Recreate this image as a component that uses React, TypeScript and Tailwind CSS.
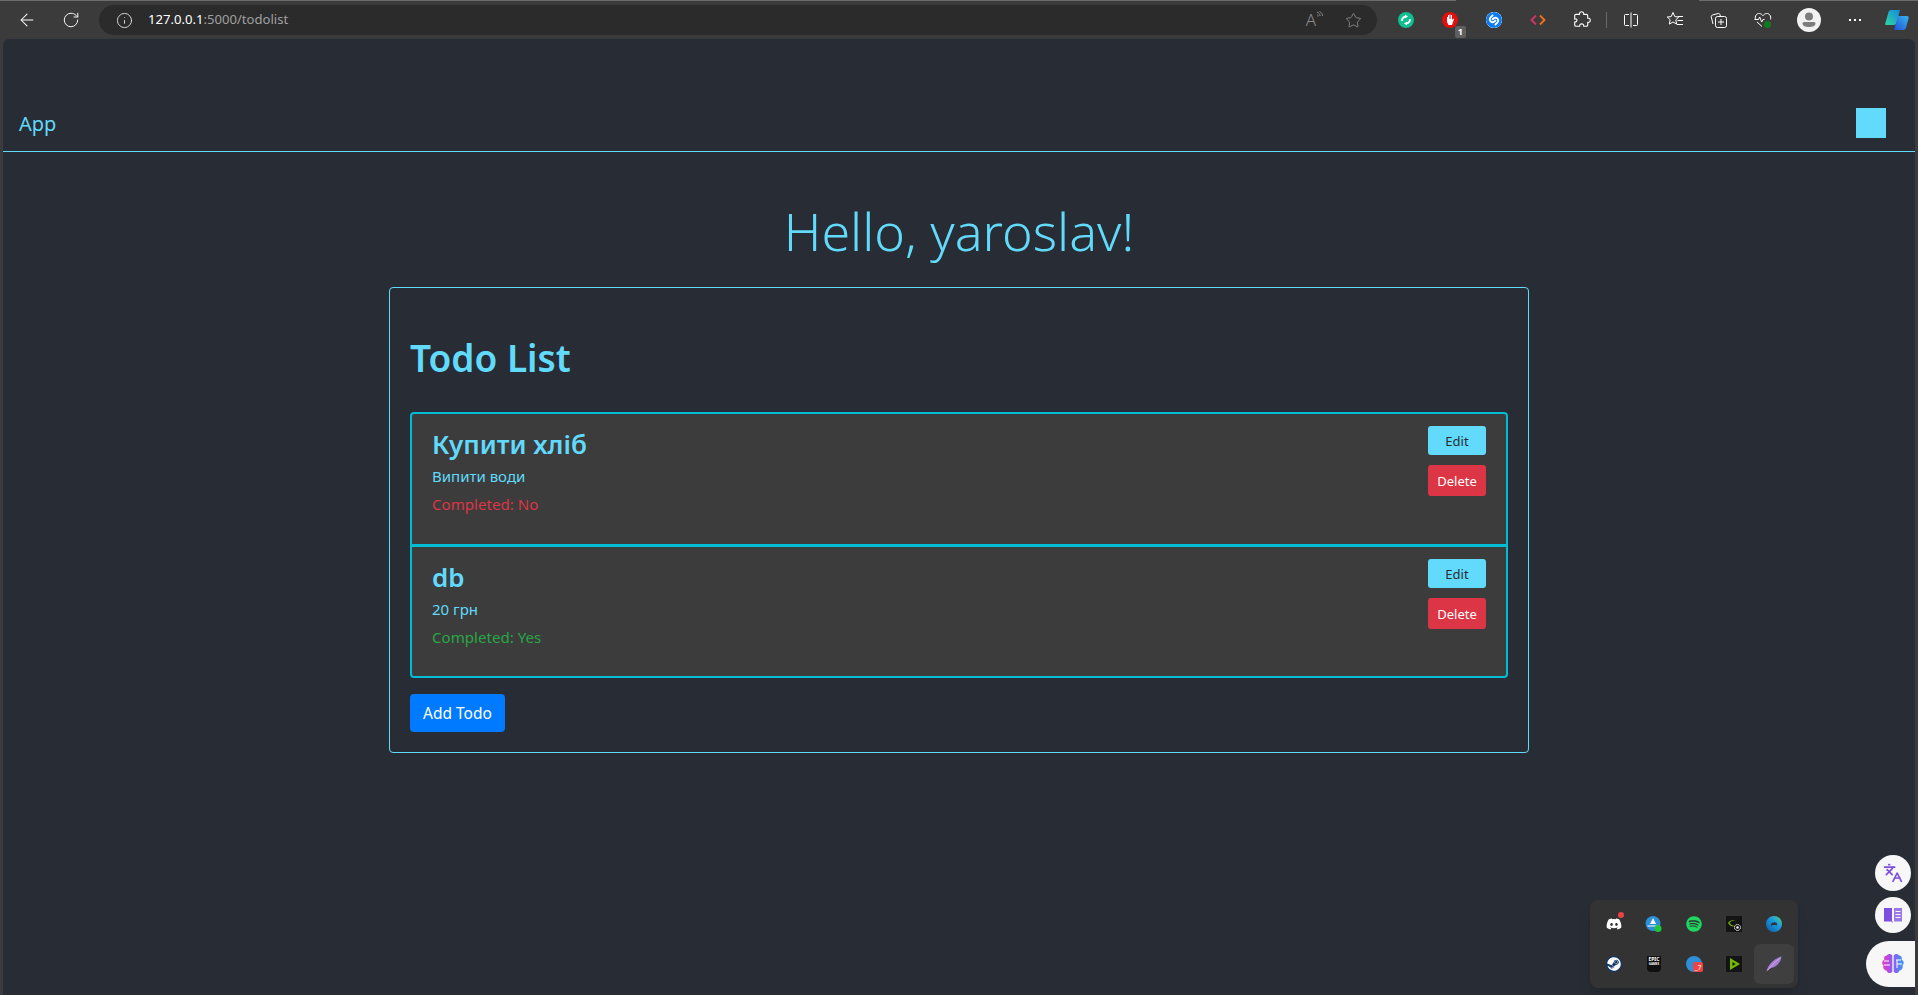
import React from 'react';
import { ArrowLeft, RotateCw, Info, Star, Languages } from 'lucide-react';
import { FaDiscord, FaSpotify, FaSteam } from 'react-icons/fa';
import { SiShazam } from 'react-icons/si';

const font = "font-['Noto_Sans','Open_Sans',sans-serif]";

interface Todo {
  title: string;
  description: string;
  completed: boolean;
}

const todos: Todo[] = [
  { title: 'Купити хліб', description: 'Випити води', completed: false },
  { title: 'db', description: '20 грн', completed: true },
];

const ToolSlot: React.FC<{ children: React.ReactNode; className?: string }> = ({ children, className = '' }) => (
  <div className={`relative flex h-[30px] w-[44px] shrink-0 items-center justify-center ${className}`}>{children}</div>
);

const PuzzleIcon = () => (
  <svg width="18" height="18" viewBox="0 0 18 18" fill="none" stroke="white" strokeWidth="1.1" strokeLinejoin="round">
    <path d="M6.5 3.4C6.3 1.6 7.4.8 8.6.8c1.300 0 2.300.9 2.100 2.600h2.700c.8 0 1.300.5 1.300 1.300v2.500c1.700-.2 2.600.7 2.600 2s-.9 2.300-2.600 2.100v2.600c0 .8-.5 1.300-1.300 1.300h-2.700c.2-1.500-.8-2.300-2-2.300s-2.200.8-2 2.300H3c-.8 0-1.300-.5-1.300-1.300v-3c1.400.2 2.300-.7 2.300-1.900S3.100 7.900 1.700 8.100V4.700c0-.8.5-1.300 1.300-1.300z" />
  </svg>
);

const CopilotIcon = () => (
  <svg width="24" height="24" viewBox="0 0 24 24" className="ml-[8px] shrink-0">
    <defs>
      <linearGradient id="cpA" x1="0" y1="1" x2="1" y2="0">
        <stop offset="0" stopColor="#2fd6a0" />
        <stop offset="1" stopColor="#1289e0" />
      </linearGradient>
      <linearGradient id="cpB" x1="0" y1="1" x2="1" y2="0">
        <stop offset="0" stopColor="#2350d8" />
        <stop offset="1" stopColor="#35b6f0" />
      </linearGradient>
    </defs>
    <path d="M6 2h9l-3.500 13c-.4 1.300-1.200 2-2.500 2H1.500C.6 17 0 16.300.3 15.400L3.500 4C3.900 2.700 4.700 2 6 2z" fill="url(#cpA)" />
    <path d="M12 8h9.500c1 0 2.500.6 2.200 1.800L21 20c-.4 1.300-1.500 2-2.800 2H9l3.500-12c.1-.8 0-1.400-.5-2z" fill="url(#cpB)" />
  </svg>
);

const BrowserBar: React.FC = () => (
  <div className="relative flex h-[39px] items-center border-t border-[#6b6b6b] bg-[#3b3b3b] pl-[5px] text-white">
    <span className="absolute left-[1456px] top-[-1px] h-px w-[243px] bg-[#3b3b3b]" />
    <ToolSlot><ArrowLeft className="h-[20px] w-[20px]" strokeWidth={1.25} /></ToolSlot>
    <ToolSlot><RotateCw className="h-[18px] w-[18px]" strokeWidth={1.25} /></ToolSlot>
    <div className="ml-[6px] flex h-[30px] w-[1278px] items-center rounded-full bg-[#2b2b2b] pl-[17px] pr-[15px]">
      <Info className="h-[17px] w-[17px] text-[#e5e5e5]" strokeWidth={1.25} />
      <span className="ml-[15px] text-[13.1px] text-[#a0a0a0]">
        <span className="text-white">127.0.0.1</span>:5000/todolist
      </span>
      <div className="ml-auto flex items-center gap-[22px] text-[#8a8a8a]">
        <div className="flex items-start">
          <span className="text-[17px] font-light leading-[18px]">A</span>
          <svg width="7" height="9" viewBox="0 0 7 9" fill="none" stroke="currentColor" strokeWidth="1">
            <path d="M1 1c2 .8 3 2.200 3 4M1 3.500c1 .4 1 1.200 1 2M3.500.5C5.500 1.500 6.500 3 6.500 5" />
          </svg>
        </div>
        <Star className="h-[17px] w-[17px]" strokeWidth={1.25} />
      </div>
    </div>
    <div className="ml-[7px] flex items-center">
      <ToolSlot>
        <span className="flex h-[16px] w-[16px] items-center justify-center rounded-full bg-[#0fbf8f]">
          <svg width="12" height="12" viewBox="0 0 12 12" fill="none" stroke="white" strokeWidth="1.8">
            <path d="M2 7a4 4 0 0 1 4-4.500M10 5a4 4 0 0 1-4 4.500" />
            <path d="M5 .5 8 2.500 5 4.500zM7 7.500 4 9.500l3 2z" fill="white" stroke="none" />
          </svg>
        </span>
      </ToolSlot>
      <ToolSlot>
        <span className="flex h-[16px] w-[16px] items-center justify-center rounded-full bg-[#e20f0f]">
          <svg width="10" height="12" viewBox="0 0 10 12" fill="white">
            <path d="M3 1h1v4h.5V.5h1V5H6V1h1v5l1.200-1.500.8.5L7 11H3.500L2 8V3h1z" />
          </svg>
        </span>
        <span className="absolute bottom-[-3px] right-[6px] rounded-[2px] bg-[#5f5f5f] px-[3px] text-[9px] font-bold leading-[12px]">1</span>
      </ToolSlot>
      <ToolSlot>
        <span className="flex h-[16px] w-[16px] items-center justify-center rounded-full bg-[#0b7cf0] text-white">
          <SiShazam className="h-[16px] w-[16px] rounded-full bg-white text-[#0b7cf0]" />
        </span>
      </ToolSlot>
      <ToolSlot>
        <svg width="16" height="12" viewBox="0 0 16 12" fill="none" strokeWidth="1.8">
          <path d="M6 1.500 1.500 6 6 10.500" stroke="#d6336c" />
          <path d="M10 1.500 14.500 6 10 10.500" stroke="#f97316" />
        </svg>
      </ToolSlot>
      <ToolSlot><PuzzleIcon /></ToolSlot>
      <div className="ml-[2px] h-[16px] w-px bg-[#6a6a6a]" />
      <ToolSlot className="ml-[2px]">
        <svg width="16" height="16" viewBox="0 0 16 16" fill="none" stroke="white" strokeWidth="1">
          <path d="M6 2.500H2.500a1 1 0 0 0-1 1v9a1 1 0 0 0 1 1H6M10 2.500h3.500a1 1 0 0 1 1 1v9a1 1 0 0 1-1 1H10M8 .5v15" />
        </svg>
      </ToolSlot>
      <ToolSlot>
        <svg width="18" height="18" viewBox="0 0 18 18" fill="none" stroke="white" strokeWidth="1" strokeLinejoin="round">
          <path d="M7 1.500 8.800 5.600l4 .4-3 2.800.9 4.300L7 11l-3.700 2.100.9-4.300-3-2.800 4-.4zM12 5.500h5M11.500 9.500H17M11 13.500h6" />
        </svg>
      </ToolSlot>
      <ToolSlot>
        <svg width="18" height="18" viewBox="0 0 18 18" fill="none" stroke="white" strokeWidth="1">
          <path d="M3 13 1.300 6c-.2-1 .2-1.700 1.200-2L8 2.500c1-.2 1.700.2 2 1.200l.3 1.300" />
          <rect x="5.500" y="5.500" width="11" height="11" rx="2" />
          <path d="M11 8v6M8 11h6" />
        </svg>
      </ToolSlot>
      <ToolSlot>
        <svg width="18" height="18" viewBox="0 0 18 18" fill="none" stroke="white" strokeWidth="1">
          <path d="M1.500 8.500C.4 5 3 2 5.500 2.500c1.500.2 2.700 1.100 3.500 2.200C9.800 3.600 11 2.700 12.500 2.500c2.500-.5 5 2.500 4 6M3 11l5 4.500" />
          <path d="M.5 8.500h4l1.200-2.500 2 5 1.300-2.500h1.500" />
          <circle cx="13.500" cy="13.500" r="3.500" fill="#0f7b1f" stroke="none" />
        </svg>
      </ToolSlot>
      <ToolSlot className="ml-[2px]">
        <svg width="24" height="24" viewBox="0 0 24 24">
          <circle cx="12" cy="12" r="12" fill="#f2f2f2" />
          <circle cx="12" cy="8.500" r="4" fill="#7d7d7d" />
          <path d="M5.500 15.500c0-1 1-1.500 2-1.500h9c1 0 2 .5 2 1.500 0 2.500-3 3.500-6.500 3.500s-6.500-1-6.500-3.500z" fill="#7d7d7d" />
        </svg>
      </ToolSlot>
      <ToolSlot className="ml-[2px]">
        <div className="flex gap-[3px]">
          <span className="h-[2px] w-[2px] bg-white" />
          <span className="h-[2px] w-[2px] bg-white" />
          <span className="h-[2px] w-[2px] bg-white" />
        </div>
      </ToolSlot>
      <CopilotIcon />
    </div>
  </div>
);

const TodoItem: React.FC<{ todo: Todo }> = ({ todo }) => (
  <div className="flex h-[134px] items-start justify-between border-2 border-[#00bcd4] bg-[#3c3c3c] pb-[20px] pl-[20px] pr-[20px] pt-[12px] first:rounded-t last:-mt-[1px] last:h-[133px] last:rounded-b">
    <div>
      <h3 className="pt-[1px] text-[26px] font-semibold leading-[34px] text-[#61dafb]">{todo.title}</h3>
      <p className="mt-[3px] text-[15px] leading-[24px] text-[#61dafb]">{todo.description}</p>
      <p className={`mt-[4px] text-[15.1px] leading-[24px] ${todo.completed ? 'text-[#28a745]' : 'text-[#dc3545]'}`}>
        Completed: {todo.completed ? 'Yes' : 'No'}
      </p>
    </div>
    <div className="flex w-[58px] flex-col gap-[10px]">
      <button className="h-[29px] rounded-[3px] bg-[#61dafb] pt-[2px] text-[13px] text-[#282c34]">Edit</button>
      <button className="h-[31px] rounded-[3px] bg-[#dc3545] pt-[2px] text-[13px] text-white">Delete</button>
    </div>
  </div>
);

const Tile: React.FC<{ children: React.ReactNode; active?: boolean }> = ({ children, active }) => (
  <div className={`relative flex h-[40px] w-[40px] items-center justify-center rounded-md ${active ? 'bg-[#3f3f3f]' : ''}`}>
    {children}
  </div>
);

const Tray: React.FC = () => (
  <div className="absolute left-[1590px] top-[900px] grid grid-cols-5 rounded-lg bg-[#333333] p-[4px] shadow-lg">
    <Tile>
      <FaDiscord className="h-[16px] w-[16px] text-white" />
      <span className="absolute right-[10px] top-[8px] h-[6px] w-[6px] rounded-full bg-[#ed4245]" />
    </Tile>
    <Tile>
      <svg width="18" height="18" viewBox="0 0 18 18">
        <circle cx="8" cy="8.500" r="7.500" fill="#2d8fd5" />
        <path d="M8 3l3 6H5z" fill="white" />
        <path d="M2.500 10.500h11v1h-11z" fill="white" />
        <circle cx="13" cy="13.500" r="3.500" fill="#22c53a" />
      </svg>
    </Tile>
    <Tile><FaSpotify className="h-[16px] w-[16px] text-[#1ed760]" /></Tile>
    <Tile>
      <svg width="16" height="16" viewBox="0 0 16 16">
        <rect width="16" height="16" fill="#141414" />
        <path d="M2 7c2-3 5-3.500 8-1.500C8 4 5 4.500 3.500 7 5 9 7 10 9 9.500 7 11.500 4 10 2 7z" fill="#76b900" />
        <circle cx="11.500" cy="11.500" r="3" fill="#141414" stroke="white" strokeWidth="1" strokeDasharray="1.500 .8" />
        <circle cx="11.500" cy="11.500" r="1.200" fill="white" />
      </svg>
    </Tile>
    <Tile>
      <svg width="16" height="16" viewBox="0 0 16 16">
        <defs>
          <linearGradient id="edgeG" x1="0" y1="1" x2="1" y2="0">
            <stop offset="0" stopColor="#0c59a4" />
            <stop offset="0.6" stopColor="#1b9de2" />
            <stop offset="1" stopColor="#54d96f" />
          </linearGradient>
        </defs>
        <circle cx="8" cy="8" r="8" fill="url(#edgeG)" />
        <path d="M5 9c0-2 2-3 4-2.800 2 .2 2.500 1.800 2 3-.8 0-1.500-.2-3-.2-1.700 0-3 .5-3 2z" fill="#333333" />
      </svg>
    </Tile>
    <Tile>
      <span className="flex h-[16px] w-[16px] items-center justify-center rounded-full bg-[#12376a]">
        <FaSteam className="h-[14px] w-[14px] text-white" />
      </span>
    </Tile>
    <Tile>
      <span className="flex h-[16px] w-[14px] flex-col items-center justify-start rounded-b-[4px] bg-[#101010] pt-[1px] text-[5px] font-bold leading-[5px] text-white">
        <span>EPIC</span>
        <span className="text-[3px] leading-[4px]">GAMES</span>
      </span>
    </Tile>
    <Tile>
      <span className="h-[16px] w-[16px] rounded-full bg-[#2d8fd5]" />
      <span className="absolute left-[19px] top-[18px] flex h-[10px] w-[10px] items-center justify-center rounded-[2px] bg-[#ef4444] text-[7px] leading-none text-white">_7</span>
    </Tile>
    <Tile>
      <svg width="16" height="16" viewBox="0 0 16 16">
        <rect width="16" height="16" fill="#141414" />
        <path d="M4 2v12l10-6zM6.500 6l3 2-3 2z" fill="#76b900" fillRule="evenodd" />
      </svg>
    </Tile>
    <Tile active>
      <svg width="16" height="16" viewBox="0 0 16 16">
        <path d="M.5 15.500C2 9 7 3 15.500.5 15 6 11 11 5 12 3.500 13 2 14 .5 15.500z" fill="#a77bd6" />
        <path d="M1.500 14.500C5 10 9 6 14 2" stroke="#d9c3ef" strokeWidth=".7" fill="none" />
      </svg>
    </Tile>
  </div>
);

const SideButtons: React.FC = () => (
  <>
    <div className="absolute left-[1875px] top-[855px] flex flex-col gap-[6px]">
      <span className="flex h-[36px] w-[36px] items-center justify-center rounded-full bg-[#f7f7f7]">
        <Languages className="h-[20px] w-[20px] text-[#7c4fe0]" strokeWidth={2} />
      </span>
      <span className="flex h-[36px] w-[36px] items-center justify-center rounded-full bg-[#f7f7f7]">
        <svg width="18" height="16" viewBox="0 0 18 16">
          <path d="M0 1h8v13l1 2-2-1.500H0z" fill="#7c4fe0" />
          <path d="M10 1h8v13.500h-8zM11.500 4v1h5V4zm0 3v1h5V7zm0 3v1h5v-1z" fill="#7c4fe0" fillRule="evenodd" opacity=".75" />
        </svg>
      </span>
    </div>
    <div className="absolute left-[1866px] top-[941px] flex h-[46px] w-[49px] items-center rounded-l-full bg-[#f7f7f7] pl-[15px]">
      <svg width="24" height="22" viewBox="0 0 24 22">
        <defs>
          <linearGradient id="brainG" x1="0" y1="0" x2="1" y2="0">
            <stop offset="0" stopColor="#ec38bc" />
            <stop offset="0.5" stopColor="#8b5cf6" />
            <stop offset="1" stopColor="#3b9cf0" />
          </linearGradient>
        </defs>
        <path d="M11.300 2.500C10 .5 7 .5 6 2.500 3.500 2.500 2.500 5 3.500 6.500 1 7.500.5 11 2.500 12.500 1.500 15 3.500 17.500 5.500 17.500c.7 3 4.500 3.500 5.800 1zM12.700 2.500c1.300-2 4.300-2 5.300 0 2.500 0 3.500 2.500 2.500 4 2.500 1 3 4.500 1 6 1 2.500-1 5-3 5-.7 3-4.500 3.500-5.800 1z" fill="url(#brainG)" />
        <path d="M3 8h5M3 12h6M15 7h5M16 11h5M16 7v8" stroke="white" strokeWidth="1" fill="none" />
      </svg>
    </div>
  </>
);

export default function App() {
  return (
    <div className={`relative h-[995px] overflow-hidden bg-[#3b3b3b] ${font}`}>
      <BrowserBar />
      <div className="mx-[3px] h-[956px] rounded-t-md bg-[#282c34]">
        <nav className="flex h-[113px] items-end justify-between border-b border-[#61dafb] pb-[13px] pl-[16px] pr-[29px]">
          <a className="-mb-[1px] text-[20px] leading-[30px] text-[#61dafb]">App</a>
          <span className="h-[30px] w-[30px] bg-[#61dafb]" />
        </nav>
        <h1 className="mt-[47px] text-center text-[52px] font-light leading-[64px] text-[#61dafb]">Hello, yaroslav!</h1>
        <main className="mx-auto mt-[24px] w-[1140px] rounded border border-[#61dafb] p-[20px]">
          <h2 className="mt-[26px] text-[37px] font-semibold leading-[48px] text-[#61dafb]">Todo List</h2>
          <div className="mt-[30px]">
            {todos.map((todo) => <TodoItem key={todo.title} todo={todo} />)}
          </div>
          <button className="mt-[16px] h-[38px] w-[95px] rounded bg-[#007bff] pt-[2px] text-[15.5px] text-white">Add Todo</button>
        </main>
      </div>

      {/* helpers and tray flyout float above the page */}
      <Tray />
      <SideButtons />
    </div>
  );
}
